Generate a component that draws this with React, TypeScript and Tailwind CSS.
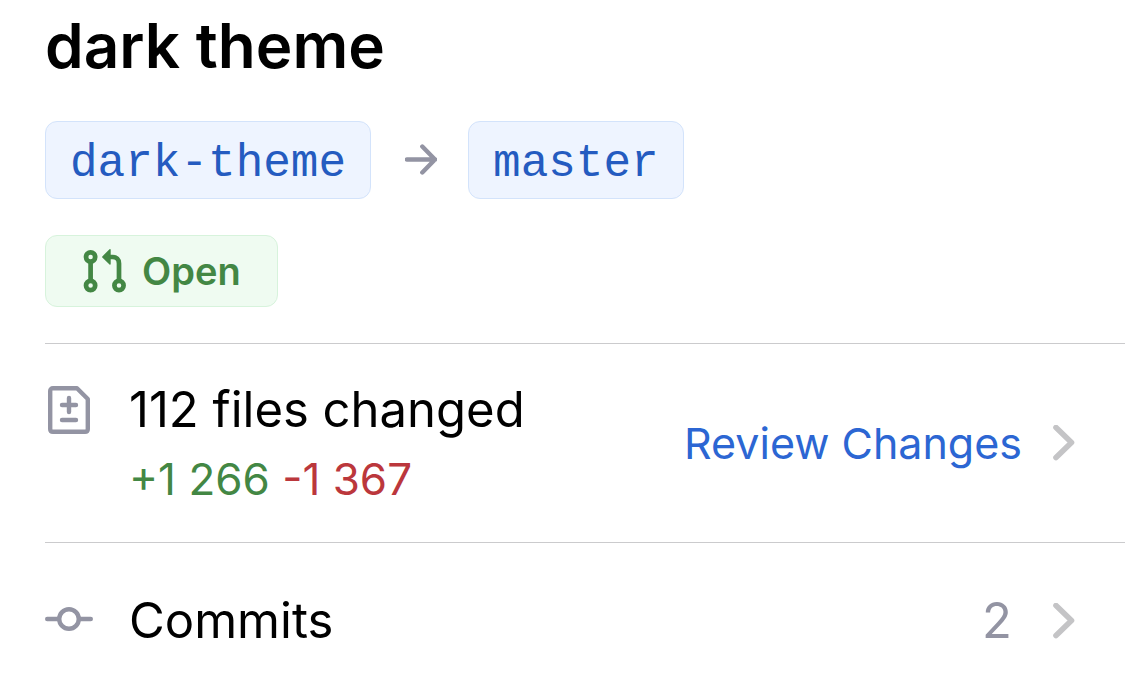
import type { ReactNode } from "react";

function Branch({ children }: { children: ReactNode }) {
  return (
    <code className="flex h-[78px] items-center rounded-xl border border-[#d3e3fb] bg-[#eef4ff] px-6 pt-2 font-['Liberation_Mono',monospace] text-[46px] leading-none text-[#245bc0]">
      {children}
    </code>
  );
}

function ArrowIcon() {
  return (
    <svg className="mr-[31px] ml-[34px] h-8 w-8 shrink-0" viewBox="0 0 32 32" fill="none" stroke="#9394a3" strokeWidth="4.4" strokeLinecap="round" strokeLinejoin="round" aria-hidden="true">
      <path d="M2 15.5H30M17.3 2.5L30 15.5L17.3 28.5" />
    </svg>
  );
}

function PullRequestIcon() {
  return (
    <svg className="h-11 w-11 shrink-0" viewBox="0 0 44 44" fill="none" stroke="#438744" strokeWidth="4.7" aria-hidden="true">
      <circle cx="8.6" cy="8" r="4.6" />
      <circle cx="8.6" cy="36.5" r="4.6" />
      <circle cx="37" cy="36.5" r="4.6" />
      <path d="M8.6 12V32M37 32V14.5C37 10.5 34.5 8 30.5 8H26" />
      <path d="M28 .8V15L20.8 7.9Z" fill="#438744" stroke="#438744" strokeWidth="1.4" strokeLinejoin="round" />
    </svg>
  );
}

function DiffFileIcon() {
  return (
    <svg className="h-12 w-12 shrink-0" viewBox="0 0 48 48" fill="none" stroke="#9394a3" strokeWidth="4.4" strokeLinecap="round" strokeLinejoin="round" aria-hidden="true">
      <path d="M8 2.2H32L42.8 13V43C42.8 44.7 41.7 45.8 40 45.8H8C6.3 45.8 5.2 44.7 5.2 43V5C5.2 3.3 6.3 2.2 8 2.2Z" />
      <path d="M17 19H31M24 12V26M17 34H31" />
    </svg>
  );
}

function CommitIcon() {
  return (
    <svg className="h-12 w-12 shrink-0" viewBox="0 0 48 48" fill="none" stroke="#9394a3" strokeWidth="4.4" strokeLinecap="round" aria-hidden="true">
      <circle cx="24" cy="22" r="9.8" />
      <path d="M2.2 22H14M34 22H45.8" />
    </svg>
  );
}

function Chevron() {
  return (
    <svg className="h-9 w-6 shrink-0" viewBox="0 0 24 36" fill="none" stroke="#c4c4c6" strokeWidth="5.6" strokeLinecap="round" strokeLinejoin="round" aria-hidden="true">
      <path d="M4 2.5L19.5 17.5L4 32.5" />
    </svg>
  );
}

export default function App() {
  return (
    <main className="min-h-screen bg-white pl-[45px] font-['Inter',sans-serif] text-black">
      <h1 className="pt-1.5 text-[62px] leading-[80px] font-semibold">dark theme</h1>
      <div className="mt-[35px] flex items-center">
        <Branch>dark-theme</Branch>
        <ArrowIcon />
        <Branch>master</Branch>
      </div>
      <div className="mt-9 flex">
        <span className="flex h-[72px] items-center gap-4 rounded-xl border border-[#d7f3dc] bg-[#effbf1] px-9 text-[38px] leading-none font-semibold text-[#438744]">
          <PullRequestIcon />
          Open
        </span>
      </div>
      <section className="mt-9 flex items-center justify-between border-t border-[#cbcbcd] pt-8 pr-[49px] pb-8">
        <div className="flex items-start gap-9">
          <div className="pt-[10px]">
            <DiffFileIcon />
          </div>
          <div>
            <h2 className="text-[49px] leading-[68px]">112 files changed</h2>
            <p className="pt-1 text-[44px] leading-[62px]">
              <span className="text-[#438744]">+1 266</span> <span className="text-[#bb373c]">-1 367</span>
            </p>
          </div>
        </div>
        <a href="#changes" className="flex items-center gap-[30px] text-[43px] leading-[66px] text-[#2c66d3]">
          Review Changes
          <Chevron />
        </a>
      </section>
      <a href="#commits" className="flex items-center justify-between border-t border-[#cbcbcd] pt-11 pr-[49px] pb-8 text-[49px] leading-[68px]">
        <span className="flex items-center gap-9">
          <CommitIcon />
          Commits
        </span>
        <span className="flex items-center gap-10 text-[#9394a3]">
          2
          <Chevron />
        </span>
      </a>
    </main>
  );
}
